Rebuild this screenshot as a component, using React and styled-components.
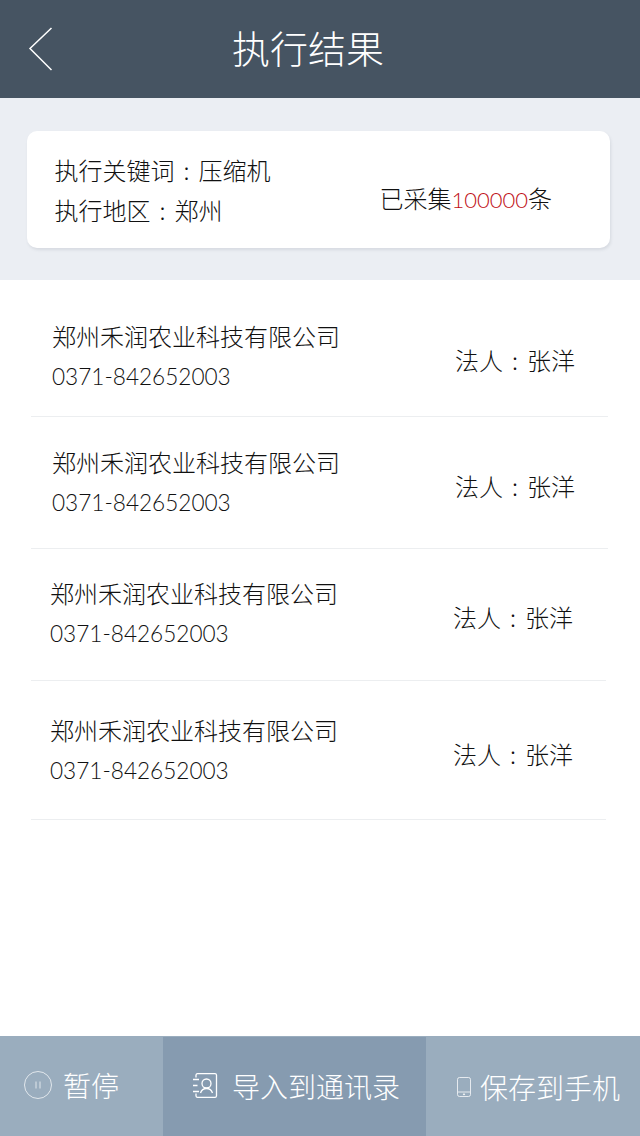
import React from 'react';
import styled, { createGlobalStyle } from 'styled-components';

const GlobalStyle = createGlobalStyle`
    html, body {
        margin: 0;
        padding: 0;
        background: #fff;
    }
    body {
        font-family: "Noto Sans CJK SC", "Noto Sans", sans-serif;
        font-weight: 200;
    }
`;

const Page = styled.div`
    display: flex;
    flex-direction: column;
    width: 640px;
    height: 1136px;
    overflow: hidden;
`;

const Header = styled.header`
    display: flex;
    align-items: center;
    flex: 0 0 98px;
    background: #465462;
    color: #fff;
`;

const BackButton = styled.div`
    display: flex;
    flex: 0 0 232px;
    padding-left: 28px;
    box-sizing: border-box;
`;

const Title = styled.h1`
    margin: -4px 0 0;
    font-size: 38px;
    font-weight: 200;
    line-height: 1;
`;

const Summary = styled.section`
    flex: 0 0 182px;
    box-sizing: border-box;
    padding: 33px 30px 0 27px;
    background: #ebeef3;
`;

const SummaryCard = styled.div`
    display: flex;
    justify-content: space-between;
    align-items: center;
    height: 117px;
    box-sizing: border-box;
    padding: 0 58px 0 27.5px;
    background: #fff;
    border-radius: 10px;
    box-shadow: 1px 2px 3px rgba(70, 84, 98, 0.12);
    color: #111;
    font-size: 24px;
`;

const SummaryLines = styled.div`
    display: flex;
    flex-direction: column;
    gap: 4px;
    line-height: 36px;
`;

const Collected = styled.div`
    margin-top: 16px;
`;

const Count = styled.span`
    color: #c00f16;
    font-family: "Lato", "Noto Sans", sans-serif;
    font-size: 22px;
    font-weight: 300;
`;

const Colon = styled.span`
    display: inline-block;
    width: 24px;
    text-align: center;
`;

const List = styled.ul`
    flex: 1;
    margin: 0;
    padding: 0;
    list-style: none;
    background: #fff;
`;

const Row = styled.li`
    display: flex;
    justify-content: space-between;
    align-items: center;
    box-sizing: border-box;
    height: ${({ height }) => height}px;
    width: ${({ shifted }) => (shifted ? 575 : 577)}px;
    margin-left: 31px;
    padding: ${({ top }) => top}px 33px ${({ bottom }) => bottom}px ${({ shifted }) => (shifted ? 19 : 21)}px;
    border-bottom: 1px solid #eceef0;
    color: #111;
    font-size: 24px;
`;

const Company = styled.div`
    display: flex;
    flex-direction: column;
    line-height: 39px;
`;

const Phone = styled.span`
    margin: 2px 0 -2px;
    font-family: "Lato", "Noto Sans", sans-serif;
    font-weight: 300;
    font-size: 22.6px;
`;

const Legal = styled.div`
    margin-top: 10px;
    line-height: 36px;
`;

const Toolbar = styled.footer`
    display: grid;
    grid-template-columns: 163px 263px 214px;
    flex: 0 0 100px;
    background: #9aadbe;
    color: #fff;
    font-size: 28px;
`;

const ToolButton = styled.div`
    display: flex;
    align-items: center;
    gap: ${({ gap }) => gap}px;
    margin-top: ${({ active }) => (active ? 1 : 0)}px;
    padding-left: ${({ left }) => left}px;
    padding-bottom: ${({ low }) => (low ? 0 : 2)}px;
    padding-top: ${({ low }) => (low ? 2 : 0)}px;
    background: ${({ active }) => (active ? '#869bb0' : 'transparent')};
    white-space: nowrap;
`;

const items = [
    { height: 137, top: 14, bottom: 0, shifted: false },
    { height: 132, top: 0, bottom: 4, shifted: false },
    { height: 132, top: 0, bottom: 6, shifted: true },
    { height: 139, top: 0, bottom: 2, shifted: true },
];

const PauseIcon = () => (
    <svg width="28" height="28" viewBox="0 0 28 28" fill="none" stroke="#fff" strokeOpacity="0.7">
        <circle cx="14" cy="14" r="13.500" />
        <path d="M12 10.500v7M16 10.500v7" />
    </svg>
);

const ContactsIcon = () => (
    <svg width="25" height="25" viewBox="0 0 25 25" fill="none" stroke="#fff" strokeWidth="1.300">
        <path d="M3 4.500V2A1.500 1.500 0 0 1 4.500 .7h17.500A1.500 1.500 0 0 1 23.500 2v21a1.500 1.500 0 0 1-1.500 1.300H4.500A1.500 1.500 0 0 1 3 23v-2.500" />
        <path d="M0 6.500h6M0 12.500h4.500M0 18.500h6" />
        <circle cx="13.500" cy="10.500" r="4.500" />
        <path d="M7.500 20c1-3 3-4.500 6-4.500s5 1.500 6 4.500" />
    </svg>
);

const PhoneIcon = () => (
    <svg width="14" height="20" viewBox="0 0 14 20" fill="none" stroke="#fff" strokeOpacity="0.75">
        <rect x="0.500" y="0.500" width="13" height="19" rx="2" />
        <path d="M1 15h12" />
        <circle cx="7" cy="17.300" r="0.600" fill="#fff" />
    </svg>
);

const App = () => (
    <Page>
        <GlobalStyle />
        <Header>
            <BackButton>
                <svg width="26" height="44" viewBox="0 0 26 44" fill="none" stroke="#fff" strokeWidth="1.500">
                    <path d="M23.500 1L2 21.500 23.500 43" />
                </svg>
            </BackButton>
            <Title>执行结果</Title>
        </Header>
        <Summary>
            <SummaryCard>
                <SummaryLines>
                    <span>执行关键词<Colon>:</Colon>压缩机</span>
                    <span>执行地区<Colon>:</Colon>郑州</span>
                </SummaryLines>
                <Collected>
                    已采集<Count>100000</Count>条
                </Collected>
            </SummaryCard>
        </Summary>
        <List>
            {items.map((item, i) => (
                <Row key={i} height={item.height} top={item.top} bottom={item.bottom} shifted={item.shifted}>
                    <Company>
                        <span>郑州禾润农业科技有限公司</span>
                        <Phone>0371-842652003</Phone>
                    </Company>
                    <Legal>法人<Colon>:</Colon>张洋</Legal>
                </Row>
            ))}
        </List>
        <Toolbar>
            <ToolButton left={24} gap={11}>
                <PauseIcon />
                暂停
            </ToolButton>
            <ToolButton active left={30} gap={14}>
                <ContactsIcon />
                导入到通讯录
            </ToolButton>
            <ToolButton low left={31} gap={9}>
                <PhoneIcon />
                保存到手机
            </ToolButton>
        </Toolbar>
    </Page>
);

export default App;
